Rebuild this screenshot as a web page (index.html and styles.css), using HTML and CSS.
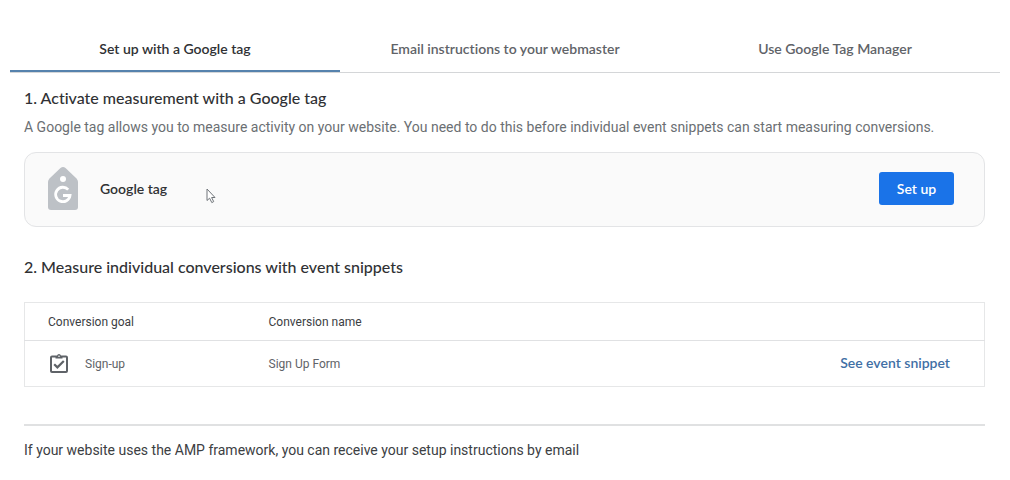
FILE: index.html
```html
<!DOCTYPE html>
<html lang="en">
<head>
<meta charset="utf-8">
<meta name="viewport" content="width=device-width, initial-scale=1">
<title>Tag setup</title>
<link rel="stylesheet" href="styles.css">
</head>
<body>
<div class="page">
  <div class="tabs" role="tablist">
    <button class="tab tab-active" type="button" role="tab" aria-selected="true">Set up with a Google tag</button>
    <button class="tab" type="button" role="tab" aria-selected="false">Email instructions to your webmaster</button>
    <button class="tab" type="button" role="tab" aria-selected="false">Use Google Tag Manager</button>
  </div>
  <main class="content">
    <h2 class="heading">1. Activate measurement with a Google tag</h2>
    <p class="description">A Google tag allows you to measure activity on your website. You need to do this before individual event snippets can start measuring conversions.</p>
    <section class="card">
      <svg class="tag-icon" viewBox="0 0 30 43" aria-hidden="true">
        <path d="M12.500 1Q15-1 17.500 1L28.500 11.500Q30 13 30 15V40Q30 43 27 43H3Q0 43 0 40V15Q0 13 1.500 11.500Z" fill="#bdc1c6"/>
        <circle cx="15" cy="12" r="3" fill="#fff"/>
        <path d="M20.200 22.600A7.200 7.200 0 1 0 22 28.500H15" fill="none" stroke="#fff" stroke-width="2.800"/>
      </svg>
      <span class="card-title">Google tag</span>
      <button class="setup" type="button">Set up</button>
      <svg class="pointer" viewBox="0 0 10 16" aria-hidden="true">
        <path d="M1 1V12.500L3.600 10.200L5.800 14.600L7.700 13.600L5.600 9.500H9Z" fill="#fff" stroke="#70757a" stroke-width="1"/>
      </svg>
    </section>
    <h2 class="heading heading-second">2. Measure individual conversions with event snippets</h2>
    <table class="conversions">
      <thead>
        <tr><th class="goal" scope="col">Conversion goal</th><th scope="col" colspan="2">Conversion name</th></tr>
      </thead>
      <tbody>
        <tr>
          <td class="goal">
            <div class="goal-label">
              <svg class="clipboard" viewBox="0 0 18 20" aria-hidden="true">
                <path d="M2 2.500H16Q17 2.500 17 3.500V17Q17 18 16 18H2Q1 18 1 17V3.500Q1 2.500 2 2.500Z" fill="none" stroke="#5f6368" stroke-width="2"/>
                <path d="M5.500 4.500V2H7Q7.300 0 9 0T11 2H12.500V4.500Z" fill="#5f6368"/>
                <circle cx="9" cy="2.200" r=".8" fill="#fff"/>
                <path d="M4.200 10.200L7.400 13.400L13.800 7" fill="none" stroke="#5f6368" stroke-width="2.200"/>
              </svg>
              <span>Sign-up</span>
            </div>
          </td>
          <td>Sign Up Form</td>
          <td class="action"><a class="link" href="#">See event snippet</a></td>
        </tr>
      </tbody>
    </table>
    <footer class="note">If your website uses the AMP framework, you can receive your setup instructions by email</footer>
  </main>
</div>
</body>
</html>
```
FILE: styles.css
```css
* { box-sizing: border-box; }
body {
  margin: 0;
  background: #fff;
  color: #3c4043;
  font-family: Roboto, "Liberation Sans", sans-serif;
  font-size: 14px;
  line-height: 20px;
}
.page { padding: 28px 10px 20px; }
.tabs {
  display: grid;
  grid-template-columns: repeat(3, 1fr);
  border-bottom: 1px solid #d4d6d8;
}
.tab {
  height: 44px;
  padding: 0 0 2px;
  border: 0;
  background: none;
  color: #5f6368;
  font: 600 14px/20px Lato, sans-serif;
  font-variant-ligatures: none;
}
.tab-active {
  color: #303134;
  box-shadow: inset 0 -2px #5682ad;
}
.content { padding: 15px 15px 0 14px; }
.heading {
  margin: 0;
  color: #303134;
  font: 500 16px/20px Lato, sans-serif;
  font-variant-ligatures: none;
}
.description { margin: 9px 0 15px; color: #6b6f73; }
.card {
  position: relative;
  display: flex;
  align-items: center;
  min-height: 75px;
  padding: 0 30px 2px 23px;
  border: 1px solid #e3e4e6;
  border-radius: 12px;
  background: #fafafa;
}
.tag-icon { width: 30px; height: 43px; margin-right: 22px; }
.card-title { color: #303134; font: 600 14px/20px Lato, sans-serif; }
.setup {
  width: 75px;
  height: 33px;
  margin-left: auto;
  padding: 0;
  border: 0;
  border-radius: 3px;
  background: #1a73e8;
  color: #fff;
  font: 600 14px/20px Lato, sans-serif;
}
.pointer { position: absolute; left: 181px; top: 35px; width: 10px; height: 16px; }
.heading-second { margin: 30px 0 25px; }
.conversions {
  width: 100%;
  border: 1px solid #e6e7e8;
  border-collapse: collapse;
  table-layout: fixed;
  font-size: 12px;
  color: #5f6368;
}
.conversions th, .conversions td { padding: 0; text-align: left; font-weight: 400; }
.conversions th { height: 38px; color: #3c4043; }
.conversions td { height: 46px; border-top: 1px solid #e0e1e3; }
.conversions .goal { width: 244px; padding-left: 23px; }
.goal-label { display: flex; align-items: center; gap: 17px; padding-left: 2px; }
.clipboard { width: 18px; height: 20px; }
.conversions .action { padding-right: 34px; text-align: right; }
.link { color: #416fa5; font: 600 14px/20px Lato, sans-serif; text-decoration: none; }
.note { margin-top: 37px; padding-top: 14px; border-top: 2px solid #e0e1e2; }
```
